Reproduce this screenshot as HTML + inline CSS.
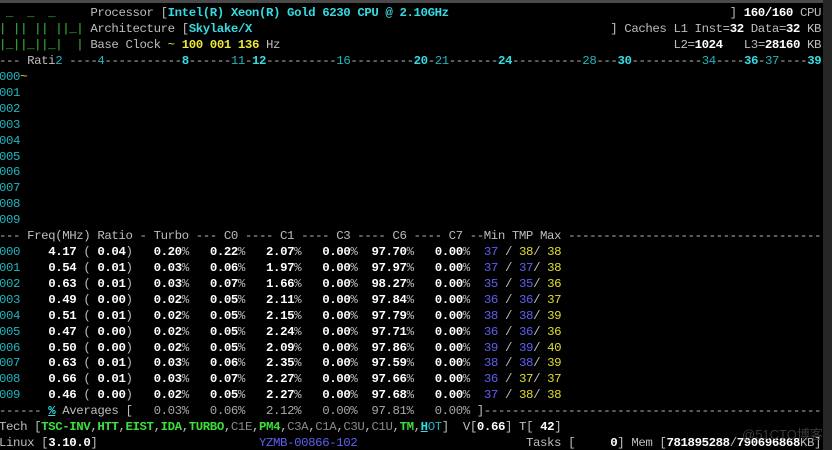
<!DOCTYPE html>
<html><head><meta charset="utf-8"><style>
html,body{margin:0;padding:0;background:#000;width:832px;height:450px;overflow:hidden;position:relative}
.top{position:absolute;left:0;top:0;width:832px;height:3px;background:#4a4a4a}
.rb{position:absolute;left:823px;top:0;width:9px;height:450px;background:#262626}
.r{position:absolute;left:-1px;white-space:pre;font-family:"Liberation Mono",monospace;font-size:12.4px;letter-spacing:-0.41px;line-height:16px;color:#bdbdbd}
.w{color:#fff;font-weight:bold}
.c{color:#1fb5bd}
.cb{color:#35dbe2;font-weight:bold}
.y{color:#e3dc2c}
.yb{color:#ece53a;font-weight:bold}
.b{color:#5f5ff2}
.gr{color:#3be03b;font-weight:bold}
.lg{color:#3cc23c}
.d{color:#8a8a8a}
.a{color:#a8a8a8}
.u{text-decoration:underline}
.wm{position:absolute;left:742px;top:424px;font-family:"Liberation Sans","Noto Sans CJK SC",sans-serif;font-size:13px;color:#3a3a3a}
</style></head><body>
<div class="top"></div>
<div class="r" style="top:5px"><span class="lg"> _  _  _    </span> Processor [<span class="cb">Intel(R) Xeon(R) Gold 6230 CPU @ 2.10GHz</span>                                        ] <span class="w">160/160</span> CPU</div>
<div class="r" style="top:21px"><span class="lg">| || || ||_|</span> Architecture [<span class="cb">Skylake/X</span>                                                   ] Caches L1 Inst=<span class="w">32</span> Data=<span class="w">32</span> KB</div>
<div class="r" style="top:37px"><span class="lg">|_||_||_|  |</span> Base Clock <span class="y">~</span> <span class="yb">100 001 136</span> Hz                                                        L2=<span class="w">1024</span>   L3=<span class="w">28160</span> KB</div>
<div class="r" style="top:53px">--- Rati<span class="c">2</span> ----<span class="c">4</span>-----------<span class="cb">8</span>------<span class="c">11</span>-<span class="cb">12</span>----------<span class="c">16</span>---------<span class="cb">20</span>-<span class="c">21</span>-------<span class="cb">24</span>----------<span class="c">28</span>---<span class="cb">30</span>----------<span class="c">34</span>----<span class="cb">36</span>-<span class="c">37</span>----<span class="cb">39</span></div>
<div class="r" style="top:69px"><span class="c">000</span><span class="y">~</span></div>
<div class="r c" style="top:85px">001</div>
<div class="r c" style="top:101px">002</div>
<div class="r c" style="top:117px">003</div>
<div class="r c" style="top:133px">004</div>
<div class="r c" style="top:149px">005</div>
<div class="r c" style="top:164px">006</div>
<div class="r c" style="top:180px">007</div>
<div class="r c" style="top:196px">008</div>
<div class="r c" style="top:212px">009</div>
<div class="r" style="top:228px">--- Freq(MHz) Ratio - Turbo --- C0 ---- C1 ---- C3 ---- C6 ---- C7 --Min TMP Max ------------------------------------</div>
<div class="r" style="top:244px"><span class="c">000</span>    <span class="w">4.17</span> ( <span class="w">0.04</span>)   <span class="w">0.20</span>%   <span class="w">0.22</span>%   <span class="w">2.07</span>%   <span class="w">0.00</span>%  <span class="w">97.70</span>%   <span class="w">0.00</span>%  <span class="b">37</span> / <span class="y">38</span>/ <span class="y">38</span></div>
<div class="r" style="top:260px"><span class="c">001</span>    <span class="w">0.54</span> ( <span class="w">0.01</span>)   <span class="w">0.03</span>%   <span class="w">0.06</span>%   <span class="w">1.97</span>%   <span class="w">0.00</span>%  <span class="w">97.97</span>%   <span class="w">0.00</span>%  <span class="b">37</span> / <span class="b">37</span>/ <span class="y">38</span></div>
<div class="r" style="top:276px"><span class="c">002</span>    <span class="w">0.63</span> ( <span class="w">0.01</span>)   <span class="w">0.03</span>%   <span class="w">0.07</span>%   <span class="w">1.66</span>%   <span class="w">0.00</span>%  <span class="w">98.27</span>%   <span class="w">0.00</span>%  <span class="b">35</span> / <span class="b">35</span>/ <span class="y">36</span></div>
<div class="r" style="top:292px"><span class="c">003</span>    <span class="w">0.49</span> ( <span class="w">0.00</span>)   <span class="w">0.02</span>%   <span class="w">0.05</span>%   <span class="w">2.11</span>%   <span class="w">0.00</span>%  <span class="w">97.84</span>%   <span class="w">0.00</span>%  <span class="b">36</span> / <span class="b">36</span>/ <span class="y">37</span></div>
<div class="r" style="top:308px"><span class="c">004</span>    <span class="w">0.51</span> ( <span class="w">0.01</span>)   <span class="w">0.02</span>%   <span class="w">0.05</span>%   <span class="w">2.15</span>%   <span class="w">0.00</span>%  <span class="w">97.79</span>%   <span class="w">0.00</span>%  <span class="b">38</span> / <span class="b">38</span>/ <span class="y">39</span></div>
<div class="r" style="top:324px"><span class="c">005</span>    <span class="w">0.47</span> ( <span class="w">0.00</span>)   <span class="w">0.02</span>%   <span class="w">0.05</span>%   <span class="w">2.24</span>%   <span class="w">0.00</span>%  <span class="w">97.71</span>%   <span class="w">0.00</span>%  <span class="b">36</span> / <span class="b">36</span>/ <span class="y">36</span></div>
<div class="r" style="top:340px"><span class="c">006</span>    <span class="w">0.50</span> ( <span class="w">0.00</span>)   <span class="w">0.02</span>%   <span class="w">0.05</span>%   <span class="w">2.09</span>%   <span class="w">0.00</span>%  <span class="w">97.86</span>%   <span class="w">0.00</span>%  <span class="b">39</span> / <span class="b">39</span>/ <span class="y">40</span></div>
<div class="r" style="top:355px"><span class="c">007</span>    <span class="w">0.63</span> ( <span class="w">0.01</span>)   <span class="w">0.03</span>%   <span class="w">0.06</span>%   <span class="w">2.35</span>%   <span class="w">0.00</span>%  <span class="w">97.59</span>%   <span class="w">0.00</span>%  <span class="b">38</span> / <span class="b">38</span>/ <span class="y">39</span></div>
<div class="r" style="top:371px"><span class="c">008</span>    <span class="w">0.66</span> ( <span class="w">0.01</span>)   <span class="w">0.03</span>%   <span class="w">0.07</span>%   <span class="w">2.27</span>%   <span class="w">0.00</span>%  <span class="w">97.66</span>%   <span class="w">0.00</span>%  <span class="b">36</span> / <span class="y">37</span>/ <span class="y">37</span></div>
<div class="r" style="top:387px"><span class="c">009</span>    <span class="w">0.46</span> ( <span class="w">0.00</span>)   <span class="w">0.02</span>%   <span class="w">0.05</span>%   <span class="w">2.27</span>%   <span class="w">0.00</span>%  <span class="w">97.68</span>%   <span class="w">0.00</span>%  <span class="b">37</span> / <span class="y">38</span>/ <span class="y">38</span></div>
<div class="r" style="top:403px">------ <span class="cb u">%</span> Averages [<span class="a">   0.03%   0.06%   2.12%   0.00%  97.81%   0.00%</span> ]------------------------------------------------</div>
<div class="r" style="top:419px">Tech [<span class="gr">TSC-INV</span>,<span class="gr">HTT</span>,<span class="gr">EIST</span>,<span class="gr">IDA</span>,<span class="gr">TURBO</span>,<span class="d">C1E</span>,<span class="gr">PM4</span>,<span class="d">C3A</span>,<span class="d">C1A</span>,<span class="d">C3U</span>,<span class="d">C1U</span>,<span class="gr">TM</span>,<span class="cb u">H</span><span class="c">OT</span>]  V[<span class="w">0.66</span>] T[<span class="w"> 42</span>]</div>
<div class="r" style="top:435px">Linux [<span class="w">3.10.0</span>]                       <span class="b">YZMB-00866-102</span>                        Tasks [     <span class="w">0</span>] Mem [<span class="w">781895288</span>/<span class="w">790696868</span>KB]</div>
<div class="rb"></div>
<div class="wm">@51CTO博客</div>
</body></html>
